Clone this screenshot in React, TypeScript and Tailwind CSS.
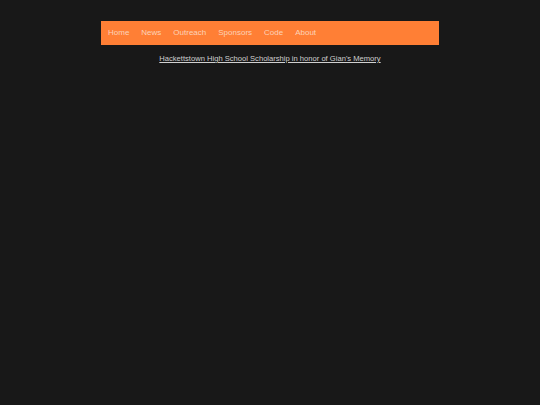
export default function App() {
  const links = ["Home", "News", "Outreach", "Sponsors", "Code", "About"];
  return (
    <div className="min-h-[405px] bg-[#181818] pt-[21px] font-['Liberation_Sans',Arial,sans-serif]">
      <nav className="mx-auto flex h-[24px] w-[338px] items-center bg-[#ff7f35] pl-[1px]">
        {links.map((l) => (
          <a key={l} className="px-[6px] text-[8px] leading-none text-[#fdd2b8]">
            {l}
          </a>
        ))}
      </nav>
      <p className="mt-[8px] text-center text-[7.6px] text-[#d0d0d0] underline">
        Hackettstown High School Scholarship in honor of Gian's Memory
      </p>
    </div>
  );
}
